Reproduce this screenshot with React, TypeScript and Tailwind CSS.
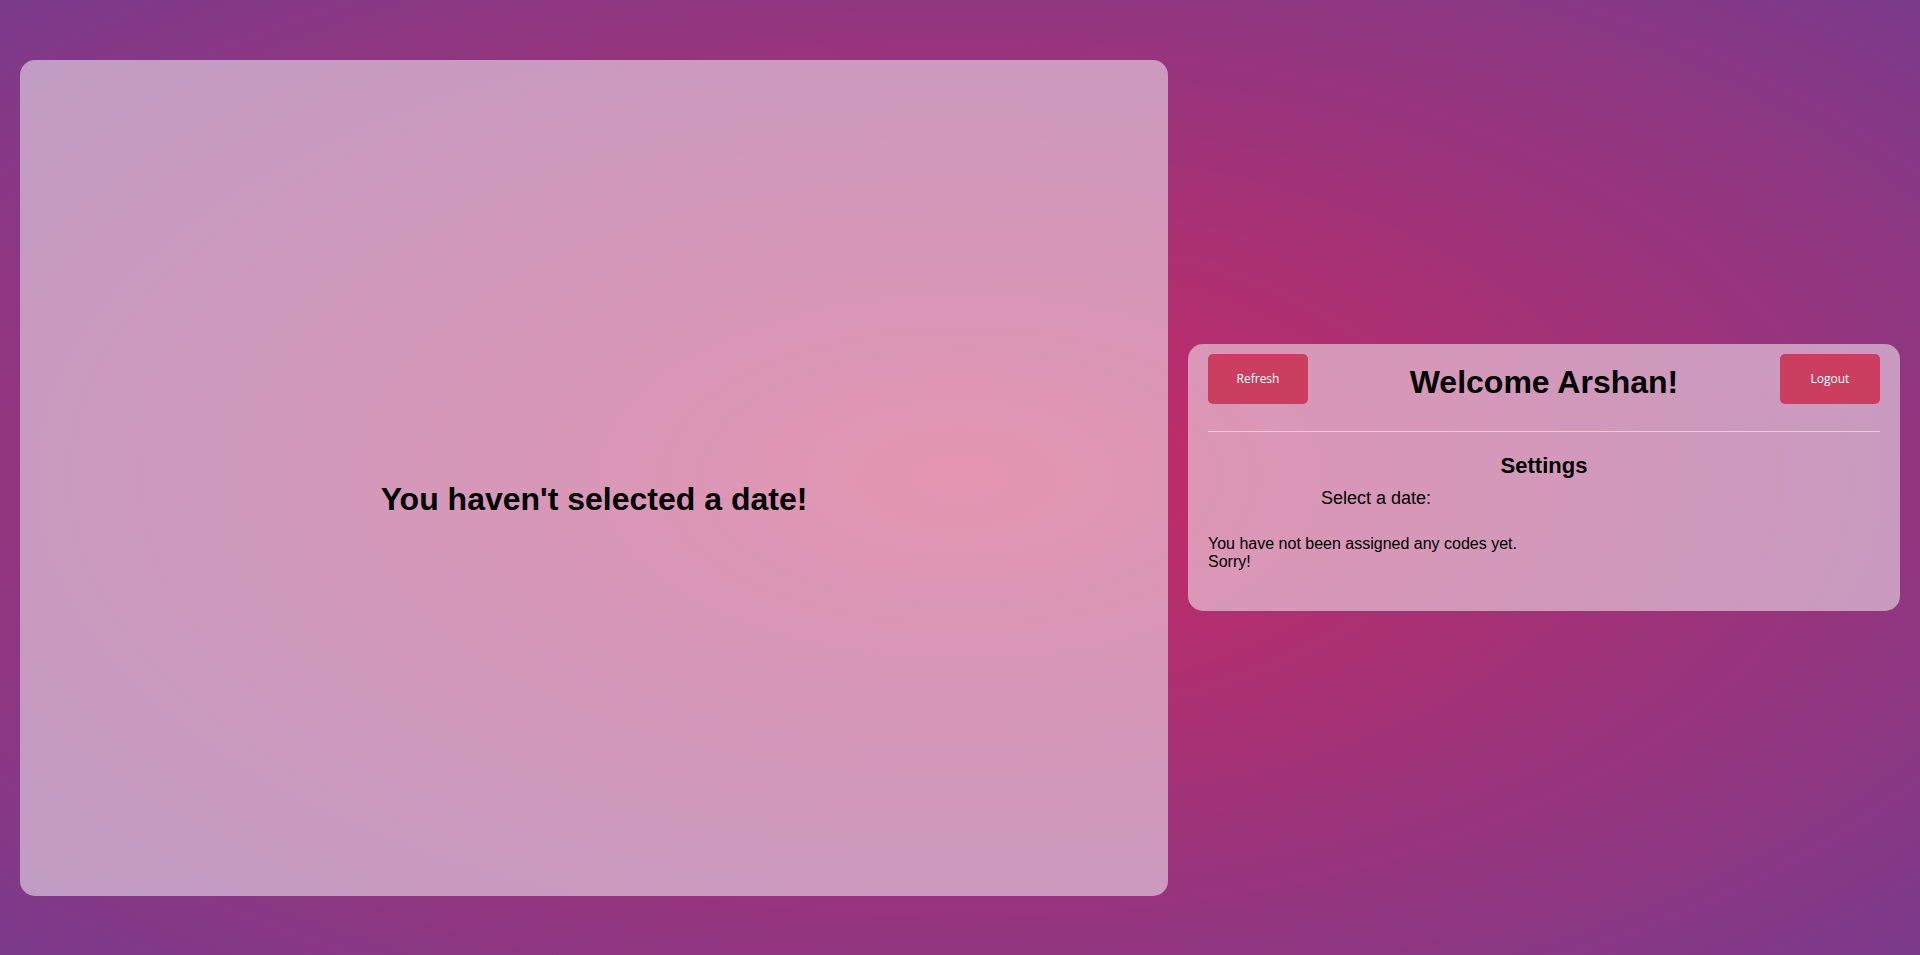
import React from "react";

const sans = { fontFamily: '"Liberation Sans", Arial, sans-serif' };
const btnFont = { fontFamily: '"Open Sans", "Noto Sans", sans-serif' };

function ActionButton({ label }: { label: string }) {
  return (
    <button
      className="h-[50px] w-[100px] shrink-0 rounded-[5px] bg-[#cc3e5f] text-[12px] text-white"
      style={btnFont}
    >
      {label}
    </button>
  );
}

export default function App() {
  return (
    <div
      className="flex h-screen w-full items-center gap-5 bg-[radial-gradient(ellipse_at_center,#c82a64_0%,#7b3a8b_100%)] px-5 text-black"
      style={sans}
    >
      {/* Calendar / date view */}
      <div className="flex h-[836px] flex-1 items-center justify-center rounded-[15px] bg-white/50 pt-[43px]">
        <h1 className="text-[32px] font-bold leading-[37px]">
          You haven't selected a date!
        </h1>
      </div>

      {/* Sidebar */}
      <div className="w-[712px] shrink-0 rounded-[15px] bg-white/50 px-5 pb-10 pt-[10px]">
        <div className="flex items-start justify-between">
          <ActionButton label="Refresh" />
          <h1 className="mt-[10px] text-[32px] font-bold leading-[37px]">
            Welcome Arshan!
          </h1>
          <ActionButton label="Logout" />
        </div>

        <div className="mt-[27px] h-px w-full bg-[#dcd3d8]" />

        <h2 className="mt-[21px] text-center text-[22px] font-bold leading-[25px]">
          Settings
        </h2>

        <div className="mt-[10px] pl-[113px] text-[18px] leading-[21px]">
          Select a date:
        </div>

        <div className="mt-[26px] text-[16px] leading-[18.4px]">
          You have not been assigned any codes yet.
          <br />
          Sorry!
        </div>
      </div>
    </div>
  );
}
